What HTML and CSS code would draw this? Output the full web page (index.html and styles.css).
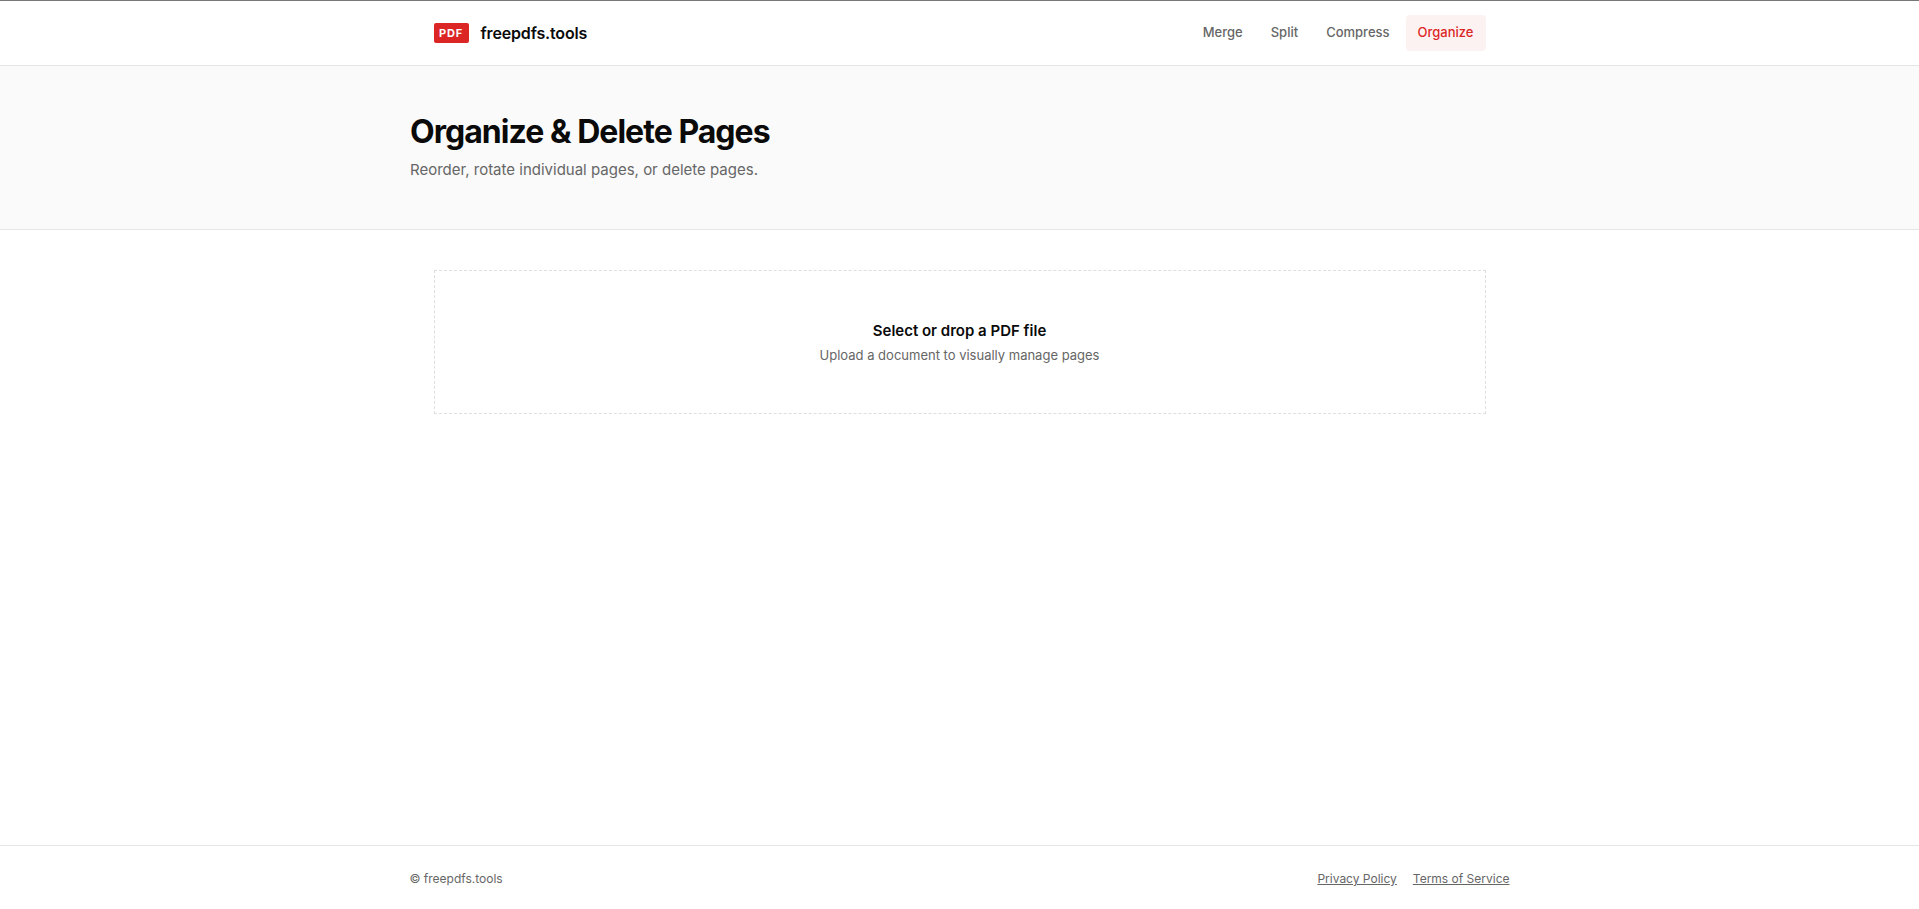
FILE: index.html
```html
<!DOCTYPE html>
<html lang="en">
<head>
    <meta charset="UTF-8">
    <title>Organize &amp; Delete Pages - freepdfs.tools</title>
    <link rel="stylesheet" href="styles.css">
</head>
<body>
    <header class="site-header">
        <div class="header-inner">
            <a class="logo" href="#">
                <span class="logo-badge">PDF</span>
                <span class="logo-name">freepdfs.tools</span>
            </a>
            <nav class="main-nav">
                <a class="nav-link" href="#">Merge</a>
                <a class="nav-link" href="#">Split</a>
                <a class="nav-link" href="#">Compress</a>
                <a class="nav-link active" href="#">Organize</a>
            </nav>
        </div>
    </header>

    <section class="hero">
        <div class="hero-inner">
            <h1>Organize &amp; Delete Pages</h1>
            <p>Reorder, rotate individual pages, or delete pages.</p>
        </div>
    </section>

    <main class="content">
        <div class="dropzone">
            <div class="drop-title">Select or drop a PDF file</div>
            <div class="drop-hint">Upload a document to visually manage pages</div>
        </div>
    </main>

    <footer class="site-footer">
        <div class="footer-inner">
            <span>© freepdfs.tools</span>
            <div class="footer-links">
                <a href="#">Privacy Policy</a>
                <a href="#">Terms of Service</a>
            </div>
        </div>
    </footer>
</body>
</html>
```

FILE: styles.css
```css
* {
    box-sizing: border-box;
}

html, body {
    height: 100%;
}

body {
    margin: 0;
    display: flex;
    flex-direction: column;
    min-height: 909px;
    background: #fff;
    color: #0a0a0a;
    font-family: Inter, "Liberation Sans", sans-serif;
    border-top: 1px solid #777;
}

a {
    color: inherit;
    text-decoration: none;
}

.site-header {
    height: 65px;
    border-bottom: 1px solid #e5e5e5;
}

.header-inner {
    max-width: 1100px;
    height: 100%;
    margin: 0 auto;
    padding: 0 24px;
    display: flex;
    align-items: center;
    justify-content: space-between;
}

.logo {
    display: flex;
    align-items: center;
    gap: 12px;
}

.logo-badge {
    background: #dc2626;
    color: #fff;
    font-size: 11px;
    font-weight: 700;
    letter-spacing: 0.88px;
    line-height: 20px;
    height: 20px;
    width: 35px;
    text-align: center;
    border-radius: 2px;
}

.logo-name {
    font-size: 16px;
    font-weight: 600;
    letter-spacing: -0.16px;
}

.main-nav {
    display: flex;
    gap: 4px;
}

.nav-link {
    padding: 9px 12px 11px;
    font-size: 13px;
    font-weight: 500;
    line-height: 16px;
    color: #666;
    border-radius: 4px;
}

.nav-link.active {
    color: #dc2626;
    background: #fdf2f2;
}

.hero {
    height: 164px;
    background: #fafafa;
    border-bottom: 1px solid #e5e5e5;
}

.hero-inner {
    max-width: 1100px;
    margin: 0 auto;
    padding: 46px 0 0 0.5px;
}

.hero h1 {
    margin: 0;
    font-size: 32px;
    font-weight: 700;
    line-height: 40px;
    letter-spacing: -0.96px;
}

.hero p {
    margin: 6px 0 0;
    font-size: 15px;
    line-height: 24px;
    color: #666;
}

.content {
    flex: 1;
    max-width: 1100px;
    width: 100%;
    margin: 0 auto;
    padding: 40px 24px;
}

.dropzone {
    height: 144px;
    border: 1px dashed #dedede;
    display: flex;
    flex-direction: column;
    align-items: center;
    justify-content: center;
}

.drop-title {
    font-size: 15px;
    font-weight: 600;
    line-height: 24px;
}

.drop-hint {
    margin-top: 2px;
    font-size: 13px;
    line-height: 20px;
    color: #666;
}

.site-footer {
    height: 64px;
    padding-top: 2px;
    border-top: 1px solid #e5e5e5;
    font-size: 12px;
    color: #666;
}

.footer-inner {
    max-width: 1100px;
    height: 100%;
    margin: 0 auto;
    display: flex;
    align-items: center;
    justify-content: space-between;
}

.footer-links {
    display: flex;
    gap: 16px;
}

.footer-links a {
    text-decoration: underline;
}
```
